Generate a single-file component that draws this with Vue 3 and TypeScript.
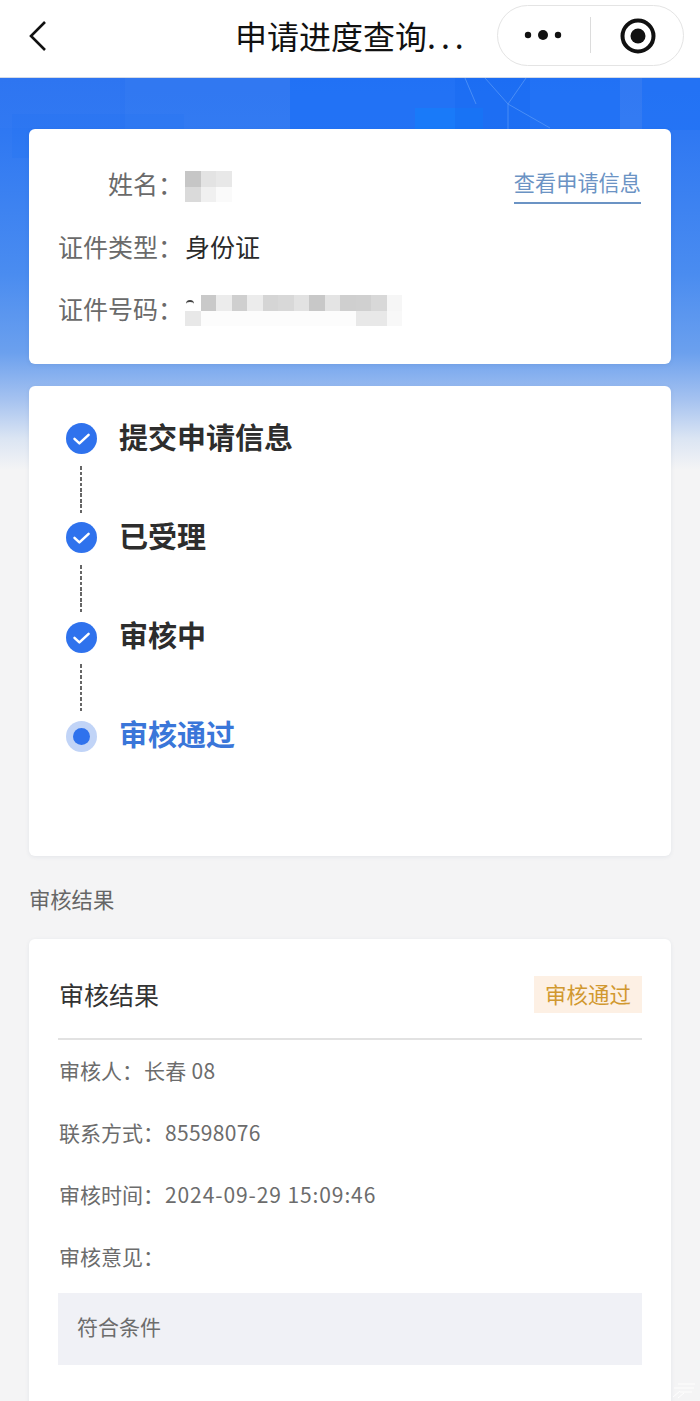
<script setup lang="ts">
const idTop = ['#fff', '#c9c9c9', '#ececec', '#cfcfcf', '#ececec', '#d5d5d5', '#d8d8d8', '#e2e2e2', '#c8c8c8', '#e4e4e4', '#cfcfcf', '#d0d0d0', '#d8d8d8', '#f6f6f6']
const idBottom = ['#e8e8e8', '#fcfcfc', '#fcfcfc', '#fcfcfc', '#fcfcfc', '#fcfcfc', '#fcfcfc', '#fcfcfc', '#fcfcfc', '#fcfcfc', '#fcfcfc', '#e8e8e8', '#e8e8e8', '#f8f8f8']
const nameCells = ['#c6c6c6', '#e3e3e3', '#e8e8e8', '#dadada', '#f0f0f0', '#fafafa']
const idCells = [...idTop, ...idBottom]

const steps = [
  { label: '提交申请信息', active: false },
  { label: '已受理', active: false },
  { label: '审核中', active: false },
  { label: '审核通过', active: true },
]
</script>

<template>
  <div class="page">
    <header class="nav">
      <svg class="back" width="20" height="32" viewBox="0 0 20 32">
        <path d="M17 2 L3 16 L17 30" fill="none" stroke="#111" stroke-width="2.6" />
      </svg>
      <div class="title">申请进度查询<span class="dots">...</span></div>
      <div class="capsule">
        <svg class="more" width="38" height="12" viewBox="0 0 38 12">
          <circle cx="4" cy="6" r="3.2" fill="#111" />
          <circle cx="19" cy="6" r="5" fill="#111" />
          <circle cx="34" cy="6" r="3.2" fill="#111" />
        </svg>
        <span class="capsule-line"></span>
        <svg class="target" width="36" height="36" viewBox="0 0 36 36">
          <circle cx="18" cy="18" r="15.5" fill="none" stroke="#111" stroke-width="4" />
          <circle cx="18" cy="18" r="7.5" fill="#111" />
        </svg>
      </div>
    </header>

    <main class="content">
      <div class="hero">
        <svg class="hero-art" width="700" height="80" viewBox="0 0 700 80">
          <rect x="0" y="0" width="120" height="50" fill="#3f82f4" opacity="0.12" />
          <rect x="125" y="0" width="165" height="52" fill="#4a8bf6" opacity="0.18" />
          <rect x="12" y="36" width="172" height="44" fill="#1f70f0" opacity="0.22" />
          <rect x="290" y="0" width="330" height="52" fill="#1a70f8" opacity="0.55" />
          <rect x="415" y="30" width="68" height="22" fill="#1382fb" opacity="0.55" />
          <rect x="455" y="0" width="75" height="52" fill="#1668f0" opacity="0.4" />
          <rect x="620" y="0" width="22" height="52" fill="#3f84f6" opacity="0.3" />
          <rect x="642" y="0" width="58" height="52" fill="#1a70f8" opacity="0.5" />
          <path d="M465 0 L476 26 M485 0 L508 26 L526 0 M508 26 L508 52 M508 26 L550 50" fill="none" stroke="#5d9bf8" stroke-width="1" opacity="0.7" />
        </svg>
      </div>

      <section class="card info">
        <div class="info-row">
          <span class="info-label">姓名&#xFF1A;</span>
          <div class="mosaic name-mosaic">
            <i v-for="(c, i) in nameCells" :key="i" :style="{ background: c }"></i>
          </div>
          <a class="info-link">查看申请信息</a>
        </div>
        <div class="info-row">
          <span class="info-label">证件类型&#xFF1A;</span>
          <span class="info-value">身份证</span>
        </div>
        <div class="info-row">
          <span class="info-label">证件号码&#xFF1A;</span>
          <div class="mosaic id-mosaic">
            <i v-for="(c, i) in idCells" :key="i" :style="{ background: c }"></i>
          </div>
        </div>
      </section>

      <section class="card progress">
        <div v-for="(step, i) in steps" :key="step.label" class="step">
          <div class="step-head" :class="{ 'is-active': step.active }">
            <span v-if="step.active" class="dot"><i></i></span>
            <svg v-else class="check" width="31" height="31" viewBox="0 0 31 31">
              <circle cx="15.5" cy="15.5" r="15.5" fill="#2f72ed" />
              <path d="M8.5 15.8 L13.4 20.4 L22.6 11.8" fill="none" stroke="#fff" stroke-width="2.5" stroke-linecap="round" stroke-linejoin="round" />
            </svg>
            <span class="step-label">{{ step.label }}</span>
          </div>
          <div v-if="i < steps.length - 1" class="connector"></div>
        </div>
      </section>

      <h2 class="section-title">审核结果</h2>

      <section class="card result">
        <div class="result-head">
          <span class="result-title">审核结果</span>
          <span class="badge">审核通过</span>
        </div>
        <div class="result-row">审核人&#xFF1A;<span class="result-value">长春 08</span></div>
        <div class="result-row">联系方式&#xFF1A;<span class="result-value">85598076</span></div>
        <div class="result-row">审核时间&#xFF1A;<span class="result-value result-time">2024-09-29 15:09:46</span></div>
        <div class="result-row">审核意见&#xFF1A;</div>
        <div class="opinion">符合条件</div>
      </section>
    </main>

    <svg class="watermark" width="26" height="18" viewBox="0 0 26 18">
      <path d="M8 2 H25 M4 6 H24 M10 10 H22 M3 15 L10 9 M8 16 L14 11" fill="none" stroke="#fff" stroke-width="1" opacity="0.9" />
    </svg>
  </div>
</template>

<style>
html,
body {
  margin: 0;
  background: #f4f4f5;
}
</style>

<style scoped>
.page {
  position: relative;
  width: 700px;
  height: 1401px;
  overflow: hidden;
  background: #f4f4f5;
  font-family: "Noto Sans CJK SC", "Noto Sans", sans-serif;
}

.nav {
  position: relative;
  z-index: 2;
  box-sizing: border-box;
  height: 78px;
  display: flex;
  align-items: center;
  padding: 0 16px 0 28px;
  background: #fff;
  border-bottom: 1px solid #d5dbe6;
}

.back {
  flex: none;
  margin-top: -6px;
}

.title {
  margin-left: 187px;
  margin-top: -8px;
  width: 240px;
  font-size: 32px;
  line-height: 44px;
  color: #111;
  white-space: nowrap;
}

.dots {
  letter-spacing: 5px;
}

.capsule {
  box-sizing: border-box;
  margin-left: auto;
  margin-top: -7px;
  width: 187px;
  height: 61px;
  display: flex;
  align-items: center;
  border: 1px solid #e4e4e4;
  border-radius: 31px;
  background: #fff;
}

.more {
  margin-left: 26px;
}

.capsule-line {
  width: 1px;
  height: 36px;
  margin-left: 28px;
  background: #dcdcdc;
}

.target {
  margin-left: 29px;
  margin-top: 1px;
}

.content {
  position: relative;
  padding: 51px 29px 0;
}

.hero {
  position: absolute;
  left: 0;
  top: 0;
  width: 700px;
  height: 392px;
  background: linear-gradient(180deg, #2c74f1 0%, #2f78f2 14%, #4a8cf0 50%, #6ba0ee 70%, #a5c2f0 82%, #dbe5f3 92%, #f4f4f5 100%);
}

.hero-art {
  display: block;
}

.card {
  position: relative;
  background: #fff;
  border-radius: 6px;
  box-shadow: 0 1px 4px rgba(40, 60, 100, 0.08);
}

.info {
  box-sizing: border-box;
  height: 235px;
  padding: 26px 30px 0 28px;
}

.info-row {
  height: 62.5px;
  display: flex;
  align-items: flex-start;
  font-size: 25px;
  line-height: 62px;
}

.info-label {
  box-sizing: border-box;
  width: 128px;
  flex: none;
  margin-top: -3px;
  padding-right: 2px;
  text-align: right;
  color: #6a6a6a;
  white-space: nowrap;
}

.info-value {
  margin-top: -3px;
  color: #2a2a2a;
}

.info-link {
  margin-left: auto;
  margin-top: 10px;
  height: 37px;
  font-size: 21.2px;
  line-height: 34px;
  color: #6b93c4;
  border-bottom: 2px solid #6b93c4;
}

.mosaic {
  display: grid;
  grid-auto-rows: 15.5px;
  margin-top: 16px;
}

.mosaic i {
  position: relative;
  display: block;
}

.name-mosaic {
  grid-template-columns: repeat(3, 15.5px);
}

.id-mosaic {
  grid-template-columns: repeat(14, 15.5px);
  margin-top: 15px;
}

.id-mosaic i:first-child::after {
  content: "";
  position: absolute;
  left: 1px;
  top: 5px;
  width: 8px;
  height: 6px;
  border-top: 2px solid #444;
  border-radius: 50%;
}

.progress {
  box-sizing: border-box;
  height: 470px;
  margin-top: 22px;
  padding: 37px 0 0 37px;
}

.step-head {
  display: flex;
  align-items: center;
  height: 31px;
}

.check {
  display: block;
  flex: none;
}

.dot {
  box-sizing: border-box;
  width: 31px;
  height: 31px;
  flex: none;
  display: flex;
  align-items: center;
  justify-content: center;
  border-radius: 50%;
  background: #c1d4f7;
}

.dot i {
  width: 17px;
  height: 17px;
  border-radius: 50%;
  background: #2f72ed;
}

.step-label {
  margin-left: 22px;
  margin-top: -6px;
  font-size: 29px;
  font-weight: 700;
  line-height: 36px;
  color: #2d2d2d;
  white-space: nowrap;
}

.is-active .step-label {
  color: #3a76d9;
}

.connector {
  width: 2px;
  height: 47px;
  margin: 11.5px 0 9.8px 14px;
  background: repeating-linear-gradient(180deg, #666 0 3.5px, transparent 3.5px 5.5px);
}

.section-title {
  margin: 28px 0 0;
  font-size: 21.3px;
  font-weight: 400;
  line-height: 30px;
  color: #666;
}

.result {
  box-sizing: border-box;
  margin-top: 25px;
  height: 480px;
  padding: 37px 29px 0;
}

.result-head {
  box-sizing: border-box;
  height: 64px;
  display: flex;
  justify-content: space-between;
  align-items: flex-start;
  border-bottom: 2px solid #e2e2e2;
}

.result-title {
  margin-left: 1px;
  font-size: 25px;
  line-height: 36px;
  color: #333;
}

.badge {
  width: 108px;
  height: 37px;
  font-size: 21.5px;
  line-height: 35px;
  text-align: center;
  color: #d1982f;
  background: #fdf0e4;
}

.result-row {
  height: 61.9px;
  margin-left: 1px;
  font-size: 21px;
  line-height: 61px;
  color: #6c6c6c;
  white-space: nowrap;
}

.result-value {
  margin-left: 1px;
  letter-spacing: 0.3px;
}

.result-time {
  letter-spacing: 0.9px;
}

.opinion {
  box-sizing: border-box;
  height: 72px;
  margin-top: 5px;
  padding: 0 19px;
  font-size: 21px;
  line-height: 67px;
  color: #6c6c6c;
  background: #f0f1f6;
}

.watermark {
  position: absolute;
  right: 4px;
  bottom: 1px;
}
</style>
